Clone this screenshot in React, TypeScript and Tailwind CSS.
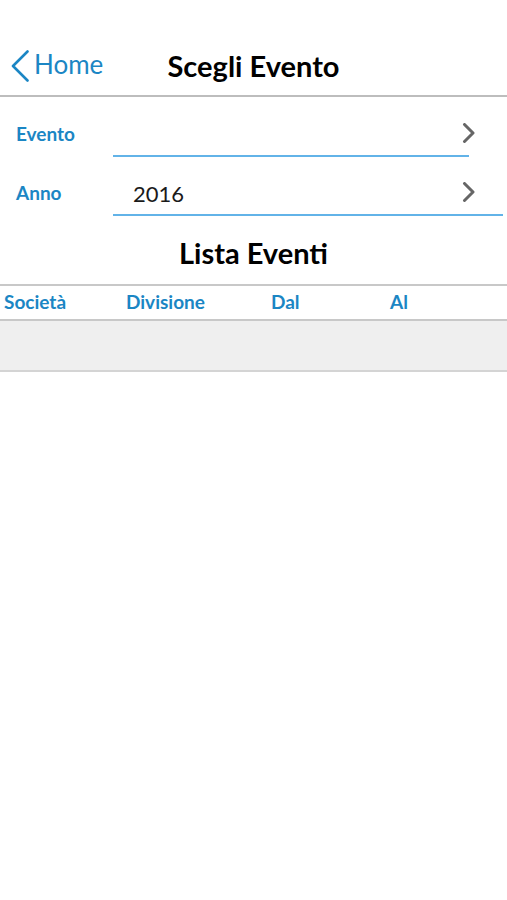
function Chevron() {
    return <svg width="14" height="20" viewBox="0 0 14 20" className="absolute right-[31px] text-[#666666]">
        <polyline points="2.5,1.5 11,10 2.5,18.5" fill="none" stroke="currentColor" strokeWidth="3" strokeLinecap="round" strokeLinejoin="round" />
    </svg>
}

function FieldRow({label, value, lineRight, top}: {label: string, value?: string, lineRight: string, top: string}) {
    return <div className={`flex items-stretch h-[60px] relative ${top}`}>
        <div className="w-[113px] pl-4 pb-[9px] flex items-end text-[19px] font-bold text-[#1b86c4]">{label}</div>
        <div className={`flex-1 flex items-end pb-[8px] border-b-2 border-[#62b3e8] ${lineRight}`}>
            <span className="flex-1 pl-5 text-[22px] leading-none pb-[1px] text-[#1a1a1a]">{value}</span>
        </div>
        <div className="absolute right-0 bottom-[14px] h-[20px] w-full pointer-events-none">
            <Chevron />
        </div>
    </div>
}

export default function App() {
    return <div className="w-[507px] h-[900px] bg-white" style={{fontFamily: "Lato, 'Open Sans', sans-serif"}}>

        <div className="h-[97px] pt-[36px] flex items-center border-b-2 border-[#bdbdbd] relative">
            <div className="flex items-center pl-[10px] text-[#1b86c4]">
                <svg width="20" height="32" viewBox="0 0 20 32">
                    <polyline points="17.5,1.5 3,16 17.5,30.5" fill="none" stroke="currentColor" strokeWidth="2.6" strokeLinecap="round" strokeLinejoin="round" />
                </svg>
                <span className="text-[26px] ml-[4px] -mt-[3px]">Home</span>
            </div>
            <h1 className="absolute left-0 right-0 top-[44px] text-center text-[29px] font-bold text-black pointer-events-none">Scegli Evento</h1>
        </div>

        <FieldRow label="Evento" lineRight="mr-[38px]" top="" />
        <FieldRow label="Anno" value="2016" lineRight="mr-[4px]" top="-mt-[1px]" />

        <h2 className="text-center text-[29px] font-bold text-black mt-[15px] h-[53px]">Lista Eventi</h2>

        <div className="border-t-2 border-b-2 border-[#c8c8c8] h-[37px] flex items-center text-[19px] font-bold text-[#1b86c4]">
            <span className="w-[122px] pl-1">Società</span>
            <span className="w-[145px] pl-1">Divisione</span>
            <span className="w-[119px] pl-1">Dal</span>
            <span className="pl-1">Al</span>
        </div>
        <div className="h-[51px] bg-[#efefef] border-b-2 border-[#d4d4d4]"></div>

    </div>
}
